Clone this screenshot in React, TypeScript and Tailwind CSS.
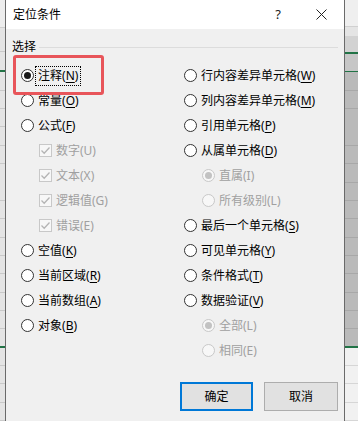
import React from "react";

type Item =
  | { kind: "radio"; label: string; k: string; checked?: boolean; focus?: boolean }
  | { kind: "check"; label: string }
  | { kind: "sub"; label: string; checked?: boolean };

const leftItems: Item[] = [
  { kind: "radio", label: "注释", k: "N", checked: true, focus: true },
  { kind: "radio", label: "常量", k: "O" },
  { kind: "radio", label: "公式", k: "F" },
  { kind: "check", label: "数字(U)" },
  { kind: "check", label: "文本(X)" },
  { kind: "check", label: "逻辑值(G)" },
  { kind: "check", label: "错误(E)" },
  { kind: "radio", label: "空值", k: "K" },
  { kind: "radio", label: "当前区域", k: "R" },
  { kind: "radio", label: "当前数组", k: "A" },
  { kind: "radio", label: "对象", k: "B" },
];

const rightItems: Item[] = [
  { kind: "radio", label: "行内容差异单元格", k: "W" },
  { kind: "radio", label: "列内容差异单元格", k: "M" },
  { kind: "radio", label: "引用单元格", k: "P" },
  { kind: "radio", label: "从属单元格", k: "D" },
  { kind: "sub", label: "直属(I)", checked: true },
  { kind: "sub", label: "所有级别(L)" },
  { kind: "radio", label: "最后一个单元格", k: "S" },
  { kind: "radio", label: "可见单元格", k: "Y" },
  { kind: "radio", label: "条件格式", k: "T" },
  { kind: "radio", label: "数据验证", k: "V" },
  { kind: "sub", label: "全部(L)", checked: true },
  { kind: "sub", label: "相同(E)" },
];

function Row({ item }: { item: Item }) {
  if (item.kind === "radio") {
    return (
      <div className="flex h-[25px] items-center">
        <span className="flex h-[13px] w-[13px] shrink-0 items-center justify-center rounded-full border border-[#333333] bg-white">
          {item.checked && <span className="h-[7px] w-[7px] rounded-full bg-[#1a1a1a]" />}
        </span>
        <span
          className={
            "ml-[4px] whitespace-nowrap text-[12px] leading-[14px] text-black " +
            (item.focus ? "outline-1 outline-dotted outline-black outline-offset-[2px]" : "")
          }
        >
          {item.label}(<span className="underline underline-offset-[2px]">{item.k}</span>)
        </span>
      </div>
    );
  }
  if (item.kind === "check") {
    return (
      <div className="flex h-[25px] items-center pl-[18px]">
        <span className="flex h-[13px] w-[13px] shrink-0 items-center justify-center border border-[#c8c8c8] bg-[#f7f7f7]">
          <svg width="11" height="11" viewBox="0 0 11 11">
            <path d="M1.5 5.5 L4.2 8.2 L9.5 2.5" fill="none" stroke="#b4b4b4" strokeWidth="1.3" />
          </svg>
        </span>
        <span className="ml-[4px] whitespace-nowrap text-[12px] leading-[14px] text-[#a0a0a0]">{item.label}</span>
      </div>
    );
  }
  return (
    <div className="flex h-[25px] items-center pl-[18px]">
      <span className="flex h-[13px] w-[13px] shrink-0 items-center justify-center rounded-full border border-[#c8c8c8] bg-[#f7f7f7]">
        {item.checked && <span className="h-[7px] w-[7px] rounded-full bg-[#c2c2c2]" />}
      </span>
      <span className="ml-[4px] whitespace-nowrap text-[12px] leading-[14px] text-[#a0a0a0]">{item.label}</span>
    </div>
  );
}

function GreyRows({ n }: { n: number }) {
  return (
    <>
      {Array.from({ length: n }).map((_, i) => (
        <React.Fragment key={i}>
          <div className="h-[18px] bg-[#bababa]" />
          <div className="h-px bg-[#a8a8a8]" />
        </React.Fragment>
      ))}
    </>
  );
}

function LightRows({ n }: { n: number }) {
  return (
    <>
      {Array.from({ length: n }).map((_, i) => (
        <React.Fragment key={i}>
          <div className="h-[18px] bg-[#e4e4e4]" />
          <div className="h-px bg-[#c9c9c9]" />
        </React.Fragment>
      ))}
    </>
  );
}

function LightRows2({ n }: { n: number }) {
  return (
    <>
      {Array.from({ length: n }).map((_, i) => (
        <React.Fragment key={i}>
          <div className="h-[18px] bg-[#f1f1f1]" />
          <div className="h-px bg-[#d6d6d6]" />
        </React.Fragment>
      ))}
    </>
  );
}

export default function App() {
  return (
    <div className="relative flex h-[421px] w-[358px] overflow-hidden bg-[#f0f0f0] font-['Noto_Sans','Noto_Sans_CJK_SC',sans-serif]">
      {/* left spreadsheet strip */}
      <div className="flex w-[5px] shrink-0 flex-col">
        <div className="h-[28px] bg-[#ededed]" />
        <div className="h-px bg-[#cfcfcf]" />
        <div className="h-[24px] bg-[#e4e4e4]" />
        <div className="h-px bg-[#c9c9c9]" />
        <div className="h-[19px] bg-[#e4e4e4]" />
        <div className="h-[2px] bg-[#217346]" />
        <LightRows n={14} />
        <div className="h-[17px] bg-[#e4e4e4]" />
        <div className="h-[2px] bg-[#217346]" />
        <LightRows n={4} />
      </div>

      {/* dialog */}
      <div className="flex w-[340px] shrink-0 flex-col border-x border-[#6a6a6a] bg-[#f0f0f0]">
        <div className="flex h-[29px] items-center bg-white pl-[7px] pr-[10px]">
          <span className="text-[12px] text-black">定位条件</span>
          <span className="ml-auto mr-[35px] text-[13px] text-[#222]">?</span>
          <svg width="11" height="11" viewBox="0 0 11 11" className="mr-[7px]">
            <path d="M0.5 0.5 L10.5 10.5 M10.5 0.5 L0.5 10.5" stroke="#222" strokeWidth="1" />
          </svg>
        </div>

        <div className="mr-[6px] mt-[11px] flex h-[14px] items-center pl-[6px]">
          <span className="text-[12px] leading-[14px] text-black">选择</span>
          <div className="ml-[3px] h-px flex-1 bg-[#dcdcdc]" />
        </div>

        <div className="mt-[9px] grid grid-cols-[163px_1fr] pl-[15px]">
          <div className="flex flex-col">
            {leftItems.map((it, i) => (
              <Row key={i} item={it} />
            ))}
          </div>
          <div className="flex flex-col">
            {rightItems.map((it, i) => (
              <Row key={i} item={it} />
            ))}
          </div>
        </div>

        <div className="mr-[6px] mt-[19px] flex justify-end gap-[11px]">
          <button className="flex h-[29px] w-[73px] items-center justify-center border-2 border-[#0078d7] bg-[#e1e1e1] text-[12px] text-black">
            确定
          </button>
          <button className="flex h-[29px] w-[74px] items-center justify-center border border-[#adadad] bg-[#e1e1e1] text-[12px] text-black">
            取消
          </button>
        </div>
      </div>

      {/* right spreadsheet strip */}
      <div className="flex flex-1 flex-col">
        <div className="h-[27px] bg-[#efefef]" />
        <div className="h-px bg-[#d0d0d0]" />
        <div className="h-[9px] bg-[#e4e4e4]" />
        <div className="h-[17px] bg-[#d2d2d2]" />
        <div className="h-[2px] bg-[#217346]" />
        <div className="h-[17px] bg-[#c6c6c6]" />
        <div className="h-[2px] bg-[#217346]" />
        <GreyRows n={14} />
        <div className="h-[17px] bg-[#bababa]" />
        <div className="h-[2px] bg-[#217346]" />
        <LightRows2 n={4} />
      </div>

      {/* red annotation box */}
      <div className="absolute left-[13px] top-[55px] h-[40px] w-[91px] rounded-[3px] border-[3px] border-[#e8555a]" />
    </div>
  );
}
